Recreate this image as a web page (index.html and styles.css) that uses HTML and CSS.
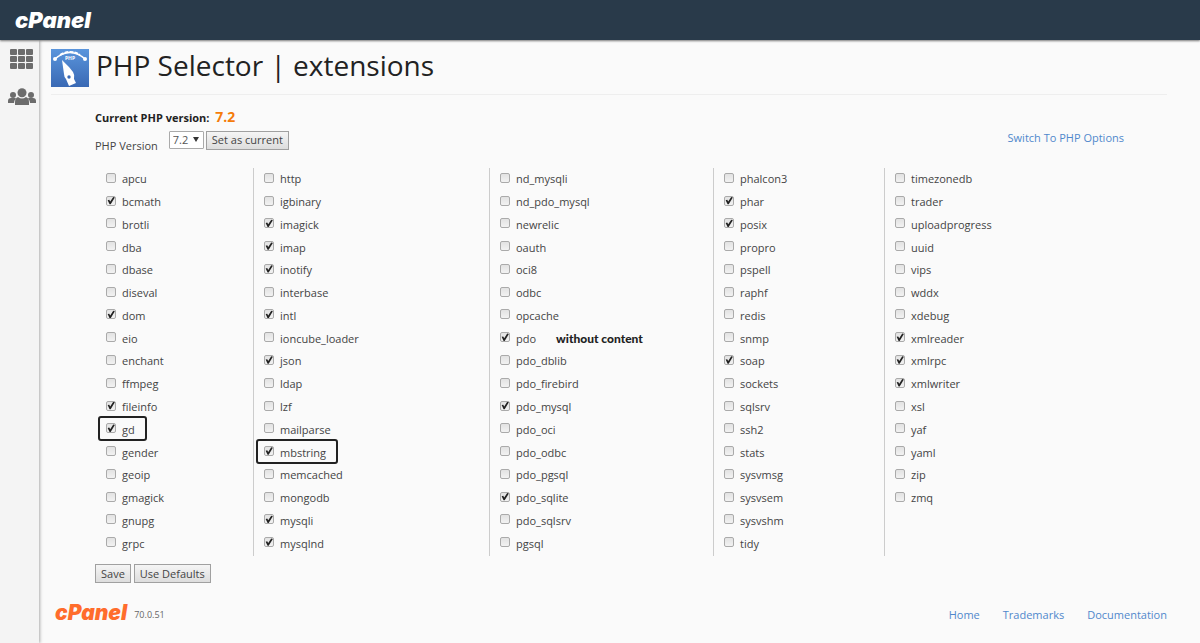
FILE: index.html
```html
<!DOCTYPE html>
<html lang="en">
<head>
<meta charset="utf-8">
<title>PHP Selector | extensions</title>
<link rel="stylesheet" href="styles.css">
</head>
<body>
<header class="topbar"><a class="brand" href="#">cPanel</a></header>
<div class="shell">
<nav class="sidebar" aria-label="Main">
<a href="#" aria-label="Tools"><svg width="23" height="20" viewBox="0 0 23 20" fill="#6c6c6c"><rect x="0" y="0" width="7" height="6" rx="1"/><rect x="8" y="0" width="7" height="6" rx="1"/><rect x="16" y="0" width="7" height="6" rx="1"/><rect x="0" y="7" width="7" height="6" rx="1"/><rect x="8" y="7" width="7" height="6" rx="1"/><rect x="16" y="7" width="7" height="6" rx="1"/><rect x="0" y="14" width="7" height="6" rx="1"/><rect x="8" y="14" width="7" height="6" rx="1"/><rect x="16" y="14" width="7" height="6" rx="1"/></svg></a>
<a href="#" aria-label="User manager"><svg width="28" height="18" viewBox="0 0 28 18" fill="#6c6c6c"><circle cx="5" cy="7" r="3"/><circle cx="23" cy="7" r="3"/><path d="M0 15v-2q0-3 3-3h4q1 0 1 1-2 1-2 4zM28 15v-2q0-3-3-3h-4q-1 0-1 1 2 1 2 4z"/><circle cx="14" cy="4.700" r="4.500"/><path d="M7 17v-3q0-4 3-5 4 3 8 0 3 1 3 5v3z"/></svg></a>
</nav>
<main class="content">
<div class="title">
<svg class="title-icon" width="38" height="38" viewBox="0 0 38 38" aria-hidden="true"><defs><linearGradient id="sky" x2="0" y2="1"><stop stop-color="#5a95dc"/><stop offset="1" stop-color="#3a69b4"/></linearGradient></defs><rect width="38" height="38" fill="url(#sky)"/><path d="M4 10Q19-3 34 10" fill="none" stroke="#fff" stroke-width="1.500"/><path d="M9 6Q19 0 29 6" fill="none" stroke="#fff" stroke-width="2" stroke-dasharray="4 1"/><circle cx="4" cy="10" r="2" fill="#fff"/><circle cx="34" cy="10" r="2" fill="#fff"/><text class="icon-text" x="19" y="11" text-anchor="middle">PHP</text><path d="M11 11L18 18 22 23Q24 26 23 30L25 34 18 37 15 30Q13 28 13 25z" fill="#fff"/><circle cx="18" cy="28" r="1.700" fill="#3a69b4"/></svg>
<h1>PHP Selector | extensions</h1>
</div>
<form class="selector">
<div class="version-bar">
<div>
<p class="current"><b>Current PHP version:</b> <strong>7.2</strong></p>
<div class="picker"><label for="version">PHP Version</label>
<span class="select-wrap"><select id="version"><option>7.2</option></select></span><button type="button">Set as current</button></div>
</div>
<a class="switch" href="#">Switch To PHP Options</a>
</div>
<div class="extensions">
<div class="column">
<label><input type="checkbox">apcu</label>
<label><input type="checkbox" checked>bcmath</label>
<label><input type="checkbox">brotli</label>
<label><input type="checkbox">dba</label>
<label><input type="checkbox">dbase</label>
<label><input type="checkbox">diseval</label>
<label><input type="checkbox" checked>dom</label>
<label><input type="checkbox">eio</label>
<label><input type="checkbox">enchant</label>
<label><input type="checkbox">ffmpeg</label>
<label><input type="checkbox" checked>fileinfo</label>
<label class="framed"><input type="checkbox" checked>gd</label>
<label><input type="checkbox">gender</label>
<label><input type="checkbox">geoip</label>
<label><input type="checkbox">gmagick</label>
<label><input type="checkbox">gnupg</label>
<label><input type="checkbox">grpc</label>
</div>
<div class="column">
<label><input type="checkbox">http</label>
<label><input type="checkbox">igbinary</label>
<label><input type="checkbox" checked>imagick</label>
<label><input type="checkbox" checked>imap</label>
<label><input type="checkbox" checked>inotify</label>
<label><input type="checkbox">interbase</label>
<label><input type="checkbox" checked>intl</label>
<label><input type="checkbox">ioncube_loader</label>
<label><input type="checkbox" checked>json</label>
<label><input type="checkbox">ldap</label>
<label><input type="checkbox">lzf</label>
<label><input type="checkbox">mailparse</label>
<label class="framed"><input type="checkbox" checked>mbstring</label>
<label><input type="checkbox">memcached</label>
<label><input type="checkbox">mongodb</label>
<label><input type="checkbox" checked>mysqli</label>
<label><input type="checkbox" checked>mysqlnd</label>
</div>
<div class="column">
<label><input type="checkbox">nd_mysqli</label>
<label><input type="checkbox">nd_pdo_mysql</label>
<label><input type="checkbox">newrelic</label>
<label><input type="checkbox">oauth</label>
<label><input type="checkbox">oci8</label>
<label><input type="checkbox">odbc</label>
<label><input type="checkbox">opcache</label>
<label><input type="checkbox" checked>pdo<span class="note">without content</span></label>
<label><input type="checkbox">pdo_dblib</label>
<label><input type="checkbox">pdo_firebird</label>
<label><input type="checkbox" checked>pdo_mysql</label>
<label><input type="checkbox">pdo_oci</label>
<label><input type="checkbox">pdo_odbc</label>
<label><input type="checkbox">pdo_pgsql</label>
<label><input type="checkbox" checked>pdo_sqlite</label>
<label><input type="checkbox">pdo_sqlsrv</label>
<label><input type="checkbox">pgsql</label>
</div>
<div class="column">
<label><input type="checkbox">phalcon3</label>
<label><input type="checkbox" checked>phar</label>
<label><input type="checkbox" checked>posix</label>
<label><input type="checkbox">propro</label>
<label><input type="checkbox">pspell</label>
<label><input type="checkbox">raphf</label>
<label><input type="checkbox">redis</label>
<label><input type="checkbox">snmp</label>
<label><input type="checkbox" checked>soap</label>
<label><input type="checkbox">sockets</label>
<label><input type="checkbox">sqlsrv</label>
<label><input type="checkbox">ssh2</label>
<label><input type="checkbox">stats</label>
<label><input type="checkbox">sysvmsg</label>
<label><input type="checkbox">sysvsem</label>
<label><input type="checkbox">sysvshm</label>
<label><input type="checkbox">tidy</label>
</div>
<div class="column">
<label><input type="checkbox">timezonedb</label>
<label><input type="checkbox">trader</label>
<label><input type="checkbox">uploadprogress</label>
<label><input type="checkbox">uuid</label>
<label><input type="checkbox">vips</label>
<label><input type="checkbox">wddx</label>
<label><input type="checkbox">xdebug</label>
<label><input type="checkbox" checked>xmlreader</label>
<label><input type="checkbox" checked>xmlrpc</label>
<label><input type="checkbox" checked>xmlwriter</label>
<label><input type="checkbox">xsl</label>
<label><input type="checkbox">yaf</label>
<label><input type="checkbox">yaml</label>
<label><input type="checkbox">zip</label>
<label><input type="checkbox">zmq</label>
</div>
</div>
<div class="actions"><button type="button">Save</button><button type="button">Use Defaults</button></div>
</form>
<footer class="footer">
<div class="product"><span class="brand brand-small">cPanel</span><span class="build">70.0.51</span></div>
<nav class="links" aria-label="Footer"><a href="#">Home</a><a href="#">Trademarks</a><a href="#">Documentation</a></nav>
</footer>
</main>
</div>
</body>
</html>
```
FILE: styles.css
```css
* { box-sizing: border-box; }
body {
  margin: 0;
  min-height: 100vh;
  display: flex;
  flex-direction: column;
  background: #fafafa;
  color: #444;
  font: 11px/16px "Open Sans", "Noto Sans", sans-serif;
}
a { color: #5088cc; text-decoration: none; }
.topbar {
  height: 40px;
  padding-left: 15px;
  display: flex;
  align-items: center;
  background: #293a4a;
  box-shadow: 0 1px 2px #777;
  z-index: 1;
}
.brand { color: #fff; font: italic 900 22px/24px Inter, sans-serif; }
.shell { flex: 1; display: flex; }
.sidebar {
  flex: none;
  width: 39px;
  padding: 9px 0 0 4px;
  display: flex;
  flex-direction: column;
  align-items: center;
  gap: 19px;
  background: #f4f4f4;
  box-shadow: 1px 0 3px #aaa;
}
.sidebar svg { display: block; }
.content { flex: 1; padding: 0 33px 0 12px; }
.title {
  height: 55px;
  padding-top: 9px;
  display: flex;
  align-items: flex-start;
  gap: 7px;
  border-bottom: 1px solid #eee;
}
.icon-text { fill: #fff; font: bold 5px "Open Sans", sans-serif; }
h1 { margin: 0; color: #222; font: 400 28px/32px "Open Sans", sans-serif; }
.selector { padding: 13px 43px 0 44px; }
.version-bar { display: flex; justify-content: space-between; align-items: center; }
.current { margin: 0 0 3px; line-height: 20px; }
.current b { color: #222; margin-right: 3px; }
.current strong { color: #f57c0a; font-size: 14px; line-height: 18px; }
.switch { padding-top: 16px; }
.picker { display: flex; align-items: center; height: 20px; }
.picker label { padding-top: 10px; margin-right: 11px; }
.picker select, .picker button { margin-bottom: 2px; }
.select-wrap { position: relative; margin-right: 2px; }
.select-wrap::after {
  content: "";
  position: absolute;
  right: 5px;
  top: 6px;
  border: 3px solid transparent;
  border-top: 5px solid #333;
  border-bottom: 0;
  pointer-events: none;
}
select {
  display: block;
  appearance: none;
  width: 35px;
  height: 18px;
  padding: 0 3px;
  border: 1px solid #aaa;
  border-radius: 1px;
  background: #fff;
  color: #555;
  font: inherit;
}
button {
  height: 19px;
  padding: 0 5px;
  border: 1px solid #a0a0a0;
  border-radius: 0;
  background: linear-gradient(#f5f5f5, #ddd);
  color: #444;
  font: inherit;
  line-height: 16px;
}
.extensions {
  display: grid;
  grid-template-columns: 159fr 236fr 224fr 171fr 239fr;
  margin-top: 17px;
}
.column {
  min-height: 388px;
  padding: 0 0 1px 10px;
  display: grid;
  grid-template-rows: repeat(17, 1fr);
  justify-items: start;
  border-right: 1px solid #ccc;
}
.column:first-child { padding-left: 11px; }
.column:last-child { border-right: 0; }
.column label { position: relative; display: flex; align-items: center; gap: 6px; }
input {
  appearance: none;
  flex: none;
  width: 10px;
  height: 10px;
  margin: 0 0 3px;
  display: grid;
  place-items: center;
  border: 1px solid #aaa;
  border-radius: 2px;
  background: linear-gradient(#e2e2e2, #f2f2f2);
}
input:checked::before {
  content: "";
  width: 8px;
  height: 8px;
  background: #222;
  clip-path: polygon(8% 45%, 28% 40%, 40% 62%, 78% 4%, 98% 10%, 46% 96%, 32% 96%);
}
.framed::after {
  content: "";
  position: absolute;
  inset: -2px -12px 0 -8px;
  border: 2px solid #222;
  border-radius: 3px;
}
.note { margin-left: 14px; color: #222; font: 900 12px/16px Lato, sans-serif; }
.actions { display: flex; gap: 3px; margin-top: 8px; }
.footer {
  display: flex;
  align-items: center;
  justify-content: space-between;
  padding-left: 4px;
  margin-top: 18px;
}
.product { display: flex; align-items: center; gap: 7px; }
.brand-small { color: #ff6c2c; font-size: 21px; }
.build { font-size: 9px; color: #666; padding-top: 4px; }
.links { display: flex; gap: 23px; padding-top: 4px; }
```
